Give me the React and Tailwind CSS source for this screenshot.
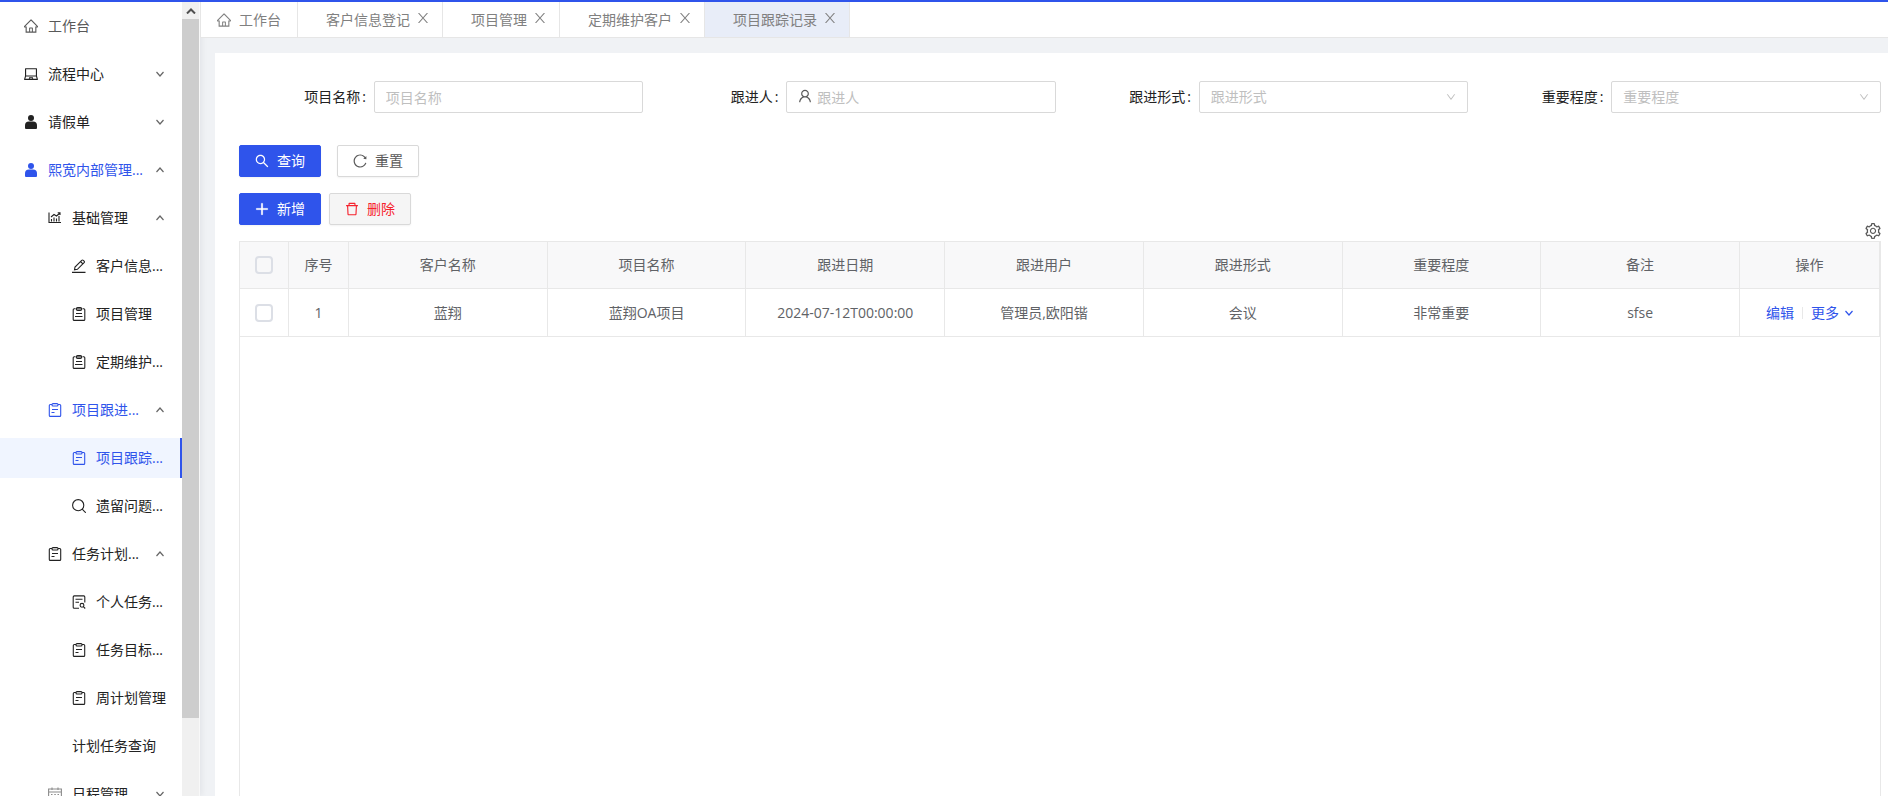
import { useState } from 'react';
import {
  AiOutlineHome,
  AiOutlineLaptop,
  AiOutlineSearch,
  AiOutlineReload,
  AiOutlinePlus,
  AiOutlineDelete,
  AiOutlineSetting,
  AiOutlineDown,
  AiOutlineUser,
} from 'react-icons/ai';

// Ant icons carry a 64 unit margin, this view drops it
const tight = '64 64 896 896';

const Svg = ({ children, className = 'size-3.5' }) => (
  <svg viewBox="0 0 14 14" className={className} fill="none" stroke="currentColor" strokeWidth="1.1" aria-hidden="true">
    {children}
  </svg>
);

const HomeIcon = (props) => <AiOutlineHome viewBox={tight} {...props} />;
const LaptopIcon = (props) => <AiOutlineLaptop viewBox={tight} {...props} />;

const PersonIcon = () => (
  <Svg>
    <g fill="currentColor" stroke="none">
      <circle cx="7" cy="3" r="3" />
      <path d="M1 13V10.500Q1 6.500 5 6.500H9Q13 6.500 13 10.500V13Q13 14 12 14H2Q1 14 1 13Z" />
    </g>
  </Svg>
);

const ChartIcon = () => (
  <Svg>
    <path d="M1 1.500V11.500H13M3.500 10.500V8M6 10.500V6.500M8.500 10.500V7.500M11 10.500V5M3 6L6 3.500L8.500 5L12 2M9.700 1.800H12V4" />
  </Svg>
);

const PenIcon = () => (
  <Svg>
    <path d="M2.500 10.800L3 8L9.700 1.300Q10.500 0.600 11.300 1.300L12.100 2.100Q12.800 2.900 12.100 3.700L5.400 10.300ZM8.500 2.500L10.900 4.900M0 13.400H13.500" />
  </Svg>
);

const ClipIcon = () => (
  <Svg>
    <path d="M3.500 1.700H2.200Q1.200 1.700 1.200 2.700V12.400Q1.200 13.400 2.200 13.400H11.800Q12.800 13.400 12.800 12.400V2.700Q12.800 1.700 11.800 1.700H10.500M4 6.500H10M3 9.500H10.500" />
    <rect x="4.300" y="0.600" width="5.400" height="2.900" rx="1.400" fill="currentColor" fillOpacity="0.500" />
  </Svg>
);

const TaskIcon = () => (
  <Svg>
    <path d="M4 1.500H2.300Q1.300 1.500 1.300 2.500V12.400Q1.300 13.400 2.300 13.400H11.700Q12.700 13.400 12.700 12.400V2.500Q12.700 1.500 11.700 1.500H10M4 6.500H10M3.500 9.500H6.500" />
    <rect x="4" y="0.600" width="6" height="2.400" rx="1" />
  </Svg>
);

const DocSearchIcon = () => (
  <Svg>
    <path d="M7 13.300H2.200Q1.200 13.300 1.200 12.300V1.900Q1.200 0.900 2.200 0.900H11.800Q12.800 0.900 12.800 1.900V7.500M3.500 4.200H10.500M3.500 7.200H7M11.400 11.700L13.200 13.500" />
    <circle cx="10" cy="10.300" r="1.900" />
  </Svg>
);

const LensIcon = () => (
  <Svg>
    <circle cx="6.200" cy="6.200" r="5.600" />
    <path d="M10.200 10.200L13.800 13.800" />
  </Svg>
);

const CalendarIcon = () => (
  <Svg className="size-3.5 text-[#8c8c8c]">
    <path d="M0.600 2H13.400V13.400H0.600ZM0.600 5H13.400M4 0.500V3M10 0.500V3M3 7.500H4.500M6.300 7.500H7.800M9.500 7.500H11M3 10.500H4.500M6.300 10.500H7.800M9.500 10.500H11" />
  </Svg>
);

const Chevron = ({ up, className }) => (
  <svg viewBox="0 0 8 8" className={className} fill="none" stroke="currentColor" strokeWidth="1.2" aria-hidden="true">
    <path d={up ? 'M0.500 6L4 2L7.500 6' : 'M0.500 2L4 6L7.500 2'} />
  </svg>
);

const menu = [
  { text: '工作台', icon: HomeIcon, level: 1, soft: true },
  { text: '流程中心', icon: LaptopIcon, level: 1, arrow: 'down' },
  { text: '请假单', icon: PersonIcon, level: 1, arrow: 'down' },
  { text: '熙宽内部管理...', icon: PersonIcon, level: 1, arrow: 'up', blue: true },
  { text: '基础管理', icon: ChartIcon, level: 2, arrow: 'up' },
  { text: '客户信息...', icon: PenIcon, level: 3 },
  { text: '项目管理', icon: ClipIcon, level: 3 },
  { text: '定期维护...', icon: ClipIcon, level: 3 },
  { text: '项目跟进...', icon: TaskIcon, level: 2, arrow: 'up', blue: true },
  { text: '项目跟踪...', icon: TaskIcon, level: 3, blue: true, selected: true },
  { text: '遗留问题...', icon: LensIcon, level: 3 },
  { text: '任务计划...', icon: TaskIcon, level: 2, arrow: 'up' },
  { text: '个人任务...', icon: DocSearchIcon, level: 3 },
  { text: '任务目标...', icon: TaskIcon, level: 3 },
  { text: '周计划管理', icon: TaskIcon, level: 3 },
  { text: '计划任务查询', level: 3 },
  { text: '日程管理', icon: CalendarIcon, level: 2, arrow: 'down' },
];

const indent = { 1: 'pl-6', 2: 'pl-12', 3: 'pl-18' };

const tabs = ['客户信息登记', '项目管理', '定期维护客户', '项目跟踪记录'];

const columns = ['客户名称', '项目名称', '跟进日期', '跟进用户', '跟进形式', '重要程度', '备注'];
const rows = [
  ['蓝翔', '蓝翔OA项目', '2024-07-12T00:00:00', '管理员,欧阳锴', '会议', '非常重要', 'sfse'],
];

function MenuItem({ item }) {
  const Icon = item.icon;
  const color = item.blue ? 'text-[#2f54eb]' : item.soft ? 'text-[#595959]' : 'text-[#222]';
  return (
    <li className="py-1">
      <a
        href="#"
        className={`flex h-10 items-center gap-2.5 pr-4.5 whitespace-nowrap ${indent[item.level]} ${color} ${
          item.selected ? 'border-r-2 border-[#2f54eb] bg-[#f0f5ff]' : ''
        }`}
      >
        {Icon && <Icon className="size-3.5 shrink-0" />}
        <span className="min-w-0 flex-1">{item.text}</span>
        {item.arrow && <Chevron up={item.arrow === 'up'} className="size-2 shrink-0 text-[#666]" />}
      </a>
    </li>
  );
}

function Sidebar() {
  return (
    <aside className="flex w-50 shrink-0 border-r border-[#f8f8f8] bg-white shadow-[2px_0_6px_rgba(0,21,41,0.06)]">
      <nav className="min-w-0 flex-1 overflow-hidden">
        <ul>
          {menu.map((item) => <MenuItem key={item.text} item={item} />)}
        </ul>
      </nav>
      {/* Scrollbar */}
      <div className="flex w-[17px] shrink-0 flex-col bg-[#f0f0f0]" aria-hidden="true">
        <div className="flex h-[17px] shrink-0 items-center justify-center text-[#505050]">
          <svg viewBox="0 0 10 6" className="h-1.5 w-2.5" fill="none" stroke="currentColor" strokeWidth="2">
            <path d="M1 5.500L5 1.500L9 5.500" />
          </svg>
        </div>
        <div className="h-[88%] bg-[#cdcdcd]" />
      </div>
    </aside>
  );
}

function Field({ id, label, children }) {
  return (
    <div className="flex h-10 items-center">
      <label htmlFor={id} className="w-1/3 pr-2 text-right text-[#222]">
        {label}<span className="ml-0.5">:</span>
      </label>
      <div className="relative w-2/3">{children}</div>
    </div>
  );
}

function SelectField({ id, label }) {
  return (
    <Field id={id} label={label}>
      <select id={id} className="h-8 w-full appearance-none rounded-xs border border-[#d9d9d9] bg-white px-[11px] text-[#bfbfbf] outline-none">
        <option>{label}</option>
      </select>
      <AiOutlineDown viewBox={tight} className="pointer-events-none absolute top-[11px] right-3 size-2.5 text-[#bfbfbf]" />
    </Field>
  );
}

function CheckBox({ label }) {
  return (
    <input
      type="checkbox"
      aria-label={label}
      className="mx-auto block size-[18px] appearance-none rounded-sm border-2 border-[#dcdfe6] bg-transparent"
    />
  );
}

const button = 'flex h-8 items-center gap-2 rounded-xs border px-[15px] shadow-xs';
const cell = 'border-r border-b border-[#e8e8e8] p-0 font-normal';

export default function App() {
  const [active, setActive] = useState('项目跟踪记录');

  return (
    <div className="flex h-screen flex-col overflow-hidden border-t-2 border-[#2f54eb] bg-[#f0f2f5] font-['Open_Sans','Noto_Sans_CJK_SC',sans-serif] text-sm text-[#606266]">
      <div className="flex min-h-0 flex-1">
        <Sidebar />

        <main className="flex min-w-0 flex-1 flex-col">
          {/* Tabs */}
          <div className="flex h-9 shrink-0 border-b border-l border-[#e6e6e6] bg-white text-[#808080]">
            <button className="flex items-center gap-2 border-r border-[#e6e6e6] px-4">
              <HomeIcon className="size-3.5" />
              工作台
            </button>
            {tabs.map((tab) => (
              <div
                key={tab}
                className={`flex items-center gap-2 border-r border-[#e6e6e6] pr-3.5 pl-7 ${active === tab ? 'bg-[#e8edf8]' : ''}`}
              >
                <button onClick={() => setActive(tab)}>{tab}</button>
                <button aria-label={`关闭${tab}`} className="pb-1">
                  <svg viewBox="0 0 10 10" className="size-2.5" fill="none" stroke="currentColor" strokeWidth="1.1">
                    <path d="M0.500 0L9.500 10M9.500 0L0.500 10" />
                  </svg>
                </button>
              </div>
            ))}
          </div>

          <section className="mt-[15px] ml-[15px] flex min-h-0 flex-1 flex-col bg-white pt-6 pr-[7px] pl-6">
            {/* Search form */}
            <form className="grid grid-cols-4 gap-2">
              <Field id="name" label="项目名称">
                <input id="name" placeholder="项目名称" className="h-8 w-full rounded-xs border border-[#d9d9d9] px-[11px] outline-none placeholder:text-[#bfbfbf]" />
              </Field>
              <Field id="user" label="跟进人">
                <AiOutlineUser viewBox={tight} className="absolute top-2 left-3 size-3.5 text-[#595959]" />
                <input id="user" placeholder="跟进人" className="h-8 w-full rounded-xs border border-[#d9d9d9] pr-3 pl-[30px] outline-none placeholder:text-[#bfbfbf]" />
              </Field>
              <SelectField id="form" label="跟进形式" />
              <SelectField id="level" label="重要程度" />
            </form>

            <div className="mt-7 flex gap-4">
              <button className={`${button} border-[#2f54eb] bg-[#2f54eb] text-white`}>
                <AiOutlineSearch viewBox={tight} className="size-3.5" />
                查询
              </button>
              <button className={`${button} border-[#d9d9d9] bg-white text-[#595959]`}>
                <AiOutlineReload viewBox={tight} className="size-3.5" />
                重置
              </button>
            </div>

            <div className="mt-4 flex gap-2">
              <button className={`${button} border-[#2f54eb] bg-[#2f54eb] text-white`}>
                <AiOutlinePlus viewBox={tight} className="size-3.5 stroke-current" strokeWidth="40" />
                新增
              </button>
              <button className={`${button} border-[#d9d9d9] bg-[#f5f5f5] text-[#f5222d]`}>
                <AiOutlineDelete viewBox={tight} className="size-3.5" />
                删除
              </button>
            </div>
            <div className="flex h-4 items-end justify-end">
              <button aria-label="列设置" className="pb-0.5 text-[#595959]">
                <AiOutlineSetting viewBox={tight} className="size-4" />
              </button>
            </div>

            {/* Records */}
            <div className="min-h-0 flex-1 border-x border-t border-[#e8e8e8]">
              <table className="w-full table-fixed border-separate border-spacing-0 text-center">
                <colgroup>
                  <col className="w-[49px]" />
                  <col className="w-[60px]" />
                  {columns.map((c) => <col key={c} />)}
                  <col className="w-[140px]" />
                </colgroup>
                <thead className="bg-[#f8f8f9]">
                  <tr className="h-[47px]">
                    <th className={cell}><CheckBox label="全选" /></th>
                    <th className={cell}>序号</th>
                    {columns.map((c) => (
                      <th key={c} className={cell}>{c}</th>
                    ))}
                    <th className={cell}>操作</th>
                  </tr>
                </thead>
                <tbody>
                  {rows.map((row, i) => (
                    <tr key={i} className="h-12">
                      <td className={cell}><CheckBox label="选择" /></td>
                      <td className={cell}>{i + 1}</td>
                      {row.map((value, j) => (
                        <td key={j} className={cell}>{value}</td>
                      ))}
                      <td className={cell}>
                        <div className="flex items-center justify-center gap-2 text-[#2f54eb]">
                          <a href="#">编辑</a>
                          <span className="h-3 w-px bg-[#e8e8e8]" />
                          <a href="#" className="flex items-center gap-1.5">
                            更多
                            <Chevron className="size-2" />
                          </a>
                        </div>
                      </td>
                    </tr>
                  ))}
                </tbody>
              </table>
            </div>
          </section>
        </main>
      </div>
    </div>
  );
}
